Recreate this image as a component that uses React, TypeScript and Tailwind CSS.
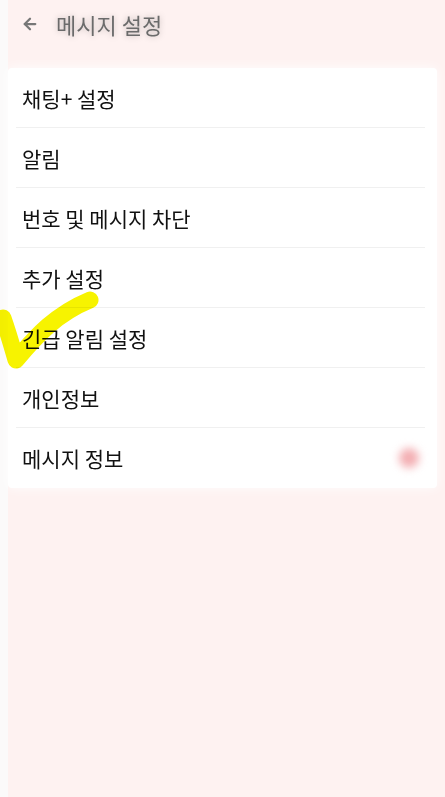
import { ArrowLeft } from 'lucide-react';

const items = ['채팅+ 설정', '알림', '번호 및 메시지 차단', '추가 설정', '긴급 알림 설정', '개인정보', '메시지 정보'];

export default function App() {
  return (
    <div
      className="relative w-[445px] h-[797px] overflow-hidden bg-[#fef2f1] flex"
      style={{ fontFamily: '"Noto Sans CJK KR", "Noto Sans", sans-serif' }}
    >
      <div className="w-[8px] shrink-0 bg-[#fbfafa]" />
      <div className="flex-1 flex flex-col pr-[8px]">
        <div className="h-[68px] flex items-center gap-[17px] pl-[13px] pb-[20px] blur-[0.6px]">
          <ArrowLeft className="w-[18px] h-[18px] text-[#777]" strokeWidth={3} />
          <span className="text-[22px] text-[#6b6b6b] [text-shadow:0_0_6px_rgba(0,0,0,0.25)]">메시지 설정</span>
        </div>
        <div className="bg-white rounded-[4px] shadow-[0_0_12px_rgba(255,255,255,0.9)]">
          {items.map((label, i) => (
            <div key={label} className="relative h-[60px] flex items-center px-[14px]">
              <span className="text-[21px] text-[#111] leading-none">{label}</span>
              {i < items.length - 1 && (
                <div className="absolute left-[8px] right-[12px] bottom-0 h-px bg-[#f0f0f0]" />
              )}
              {i === items.length - 1 && (
                <div className="absolute right-[18px] top-[20px] w-[20px] h-[20px] rounded-full bg-[#f3aeb2] blur-[4px]" />
              )}
            </div>
          ))}
        </div>
      </div>
      <svg className="absolute left-0 top-0 mix-blend-multiply" width="120" height="380" viewBox="0 0 120 380">
        <path
          d="M3 318 C 8 332, 12 346, 16 360 C 36 336, 56 314, 90 300"
          fill="none"
          stroke="#f7f300"
          strokeWidth="17"
          strokeLinecap="round"
          strokeLinejoin="round"
        />
      </svg>
    </div>
  );
}
